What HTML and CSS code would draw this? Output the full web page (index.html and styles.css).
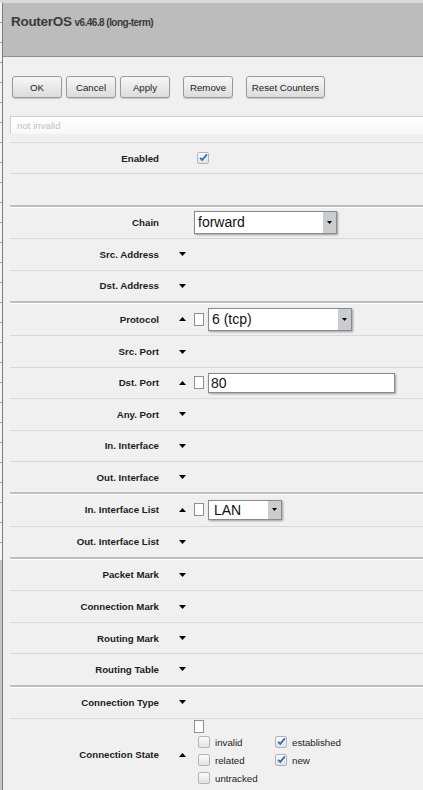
FILE: index.html
```html
<!DOCTYPE html>
<html>
<head>
<meta charset="utf-8">
<link rel="stylesheet" href="styles.css">
</head>
<body>
<div class="topstrip"></div>
<div class="main">
  <div class="leftstrip"></div>
  <div class="panel">
    <div class="header"><span class="title">RouterOS</span><span class="ver">v6.46.8 (long-term)</span></div>
    <div class="content">
      <div class="toolbar">
        <div class="group">
          <div class="btn">OK</div>
          <div class="btn">Cancel</div>
          <div class="btn">Apply</div>
        </div>
        <div class="btn">Remove</div>
        <div class="btn wide">Reset Counters</div>
      </div>
      <div class="comment">not invalid</div>
      <div class="rows">
        <div class="row">
          <div class="label">Enabled</div><div class="tri"></div>
          <div class="ctl"><span class="cb checked"><svg width="10" height="9" viewBox="0 0 10 9"><path d="M1.2 4.8 L3.6 7.2 L8.8 1" fill="none" stroke="#2f72b5" stroke-width="2"/></svg></span></div>
        </div>
        <div class="row"></div>
        <div class="row sec">
          <div class="label">Chain</div><div class="tri"></div>
          <div class="ctl"><div class="select chain"><span class="val">forward</span><span class="arr"><svg width="5" height="3"><path d="M0 0h5L2.5 3z"/></svg></span></div></div>
        </div>
        <div class="row">
          <div class="label">Src. Address</div><div class="tri"><svg width="7" height="4"><path d="M0 0h7L3.5 4z"/></svg></div>
        </div>
        <div class="row">
          <div class="label">Dst. Address</div><div class="tri"><svg width="7" height="4"><path d="M0 0h7L3.5 4z"/></svg></div>
        </div>
        <div class="row sec tall">
          <div class="label">Protocol</div><div class="tri"><svg width="7" height="4"><path d="M0 4h7L3.5 0z"/></svg></div>
          <div class="ctl"><span class="nbox"></span><div class="select proto"><span class="val">6 (tcp)</span><span class="arr"><svg width="5" height="3"><path d="M0 0h5L2.5 3z"/></svg></span></div></div>
        </div>
        <div class="row">
          <div class="label">Src. Port</div><div class="tri"><svg width="7" height="4"><path d="M0 0h7L3.5 4z"/></svg></div>
        </div>
        <div class="row">
          <div class="label">Dst. Port</div><div class="tri"><svg width="7" height="4"><path d="M0 4h7L3.5 0z"/></svg></div>
          <div class="ctl"><span class="nbox"></span><div class="input port">80</div></div>
        </div>
        <div class="row">
          <div class="label">Any. Port</div><div class="tri"><svg width="7" height="4"><path d="M0 0h7L3.5 4z"/></svg></div>
        </div>
        <div class="row">
          <div class="label">In. Interface</div><div class="tri"><svg width="7" height="4"><path d="M0 0h7L3.5 4z"/></svg></div>
        </div>
        <div class="row">
          <div class="label">Out. Interface</div><div class="tri"><svg width="7" height="4"><path d="M0 0h7L3.5 4z"/></svg></div>
        </div>
        <div class="row sec">
          <div class="label">In. Interface List</div><div class="tri"><svg width="7" height="4"><path d="M0 4h7L3.5 0z"/></svg></div>
          <div class="ctl"><span class="nbox"></span><div class="select lan"><span class="val">LAN</span><span class="arr"><svg width="5" height="3"><path d="M0 0h5L2.5 3z"/></svg></span></div></div>
        </div>
        <div class="row">
          <div class="label">Out. Interface List</div><div class="tri"><svg width="7" height="4"><path d="M0 0h7L3.5 4z"/></svg></div>
        </div>
        <div class="row sec">
          <div class="label">Packet Mark</div><div class="tri"><svg width="7" height="4"><path d="M0 0h7L3.5 4z"/></svg></div>
        </div>
        <div class="row">
          <div class="label">Connection Mark</div><div class="tri"><svg width="7" height="4"><path d="M0 0h7L3.5 4z"/></svg></div>
        </div>
        <div class="row">
          <div class="label">Routing Mark</div><div class="tri"><svg width="7" height="4"><path d="M0 0h7L3.5 4z"/></svg></div>
        </div>
        <div class="row">
          <div class="label">Routing Table</div><div class="tri"><svg width="7" height="4"><path d="M0 0h7L3.5 4z"/></svg></div>
        </div>
        <div class="row sec">
          <div class="label">Connection Type</div><div class="tri"><svg width="7" height="4"><path d="M0 0h7L3.5 4z"/></svg></div>
        </div>
        <div class="row state">
          <div class="label">Connection State</div><div class="tri"><svg width="7" height="4"><path d="M0 4h7L3.5 0z"/></svg></div>
          <div class="ctl col">
            <span class="nbox"></span>
            <div class="opts">
              <div class="opt"><span class="cb"></span>invalid</div>
              <div class="opt"><span class="cb checked"><svg width="10" height="9" viewBox="0 0 10 9"><path d="M1.2 4.8 L3.6 7.2 L8.8 1" fill="none" stroke="#2f72b5" stroke-width="2"/></svg></span>established</div>
              <div class="opt"><span class="cb"></span>related</div>
              <div class="opt"><span class="cb checked"><svg width="10" height="9" viewBox="0 0 10 9"><path d="M1.2 4.8 L3.6 7.2 L8.8 1" fill="none" stroke="#2f72b5" stroke-width="2"/></svg></span>new</div>
              <div class="opt"><span class="cb"></span>untracked</div>
            </div>
          </div>
        </div>
      </div>
    </div>
  </div>
</div>
</body>
</html>
```

FILE: styles.css
```css
html, body {
  margin: 0;
  padding: 0;
  background: #f0f0f0;
  font-family: "Liberation Sans", Arial, sans-serif;
  overflow: hidden;
}
.topstrip {
  height: 3px;
  background: #d3d9dd;
}
.main {
  display: flex;
  min-height: 787px;
}
.leftstrip {
  width: 2px;
  flex: none;
  background:
    linear-gradient(to bottom, transparent 0, transparent 557px, #c6c6c6 557px),
    repeating-linear-gradient(to bottom, #f4f4f4 0, #f4f4f4 19px, #9a9a9a 19px, #9a9a9a 20px);
  border-right: 1px solid #7c7c7c;
}
.panel {
  flex: 1;
  min-width: 0;
  background: #f0f0f0;
}
.header {
  height: 54px;
  background: #bcbcbc;
  border-bottom: 1px solid #8e8e8e;
  padding: 9px 0 0 8px;
  box-sizing: border-box;
  color: #3a3a3a;
  white-space: nowrap;
}
.title {
  font-size: 13.5px;
  font-weight: bold;
  letter-spacing: -0.3px;
}
.ver {
  font-size: 10px;
  font-weight: bold;
  letter-spacing: -0.55px;
  margin-left: 3px;
}
.content {
  padding-left: 7px;
}
.toolbar {
  display: flex;
  gap: 13px;
  margin-top: 19px;
  padding-left: 2px;
}
.group {
  display: flex;
  gap: 4px;
}
.btn {
  width: 50px;
  height: 22px;
  box-sizing: border-box;
  border: 1px solid #9a9a9a;
  border-radius: 3px;
  background: linear-gradient(#f7f7f7, #dcdcdc);
  box-shadow: 0 1px 1px rgba(0,0,0,0.18);
  font-size: 9.7px;
  color: #222;
  display: flex;
  align-items: center;
  justify-content: center;
}
.btn.wide {
  width: 79px;
}
.comment {
  margin-top: 18px;
  height: 18px;
  box-sizing: border-box;
  border-top: 1px solid #cfcfcf;
  border-left: 1px solid #cfcfcf;
  background: linear-gradient(#ffffff, #f8f8f8);
  font-size: 9.7px;
  color: #c2c2c2;
  padding: 3px 0 0 6px;
}
.rows {
  margin-top: 8px;
}
.row {
  display: flex;
  align-items: center;
  height: 31.4px;
  box-sizing: border-box;
  border-top: 1px solid #d8d8d8;
}
.row.sec {
  border-top: 2px solid #c0c0c0;
  box-shadow: inset 0 1px 0 #ffffff;
  height: 33.4px;
}
.row.tall {
  height: 34.4px;
}
.label {
  width: 149px;
  flex: none;
  text-align: right;
  font-size: 9.7px;
  font-weight: bold;
  color: #1c1c1c;
  white-space: nowrap;
}
.tri {
  width: 7px;
  flex: none;
  margin-left: 20px;
  display: flex;
  align-items: center;
}
.tri svg {
  display: block;
  fill: #000;
}
.ctl {
  margin-left: 8px;
  display: flex;
  align-items: center;
}
.cb {
  width: 12px;
  height: 12px;
  box-sizing: border-box;
  border: 1px solid #b4b4b4;
  border-radius: 2px;
  background: linear-gradient(#fbfbfb, #e2e2e2);
  display: inline-flex;
  align-items: center;
  justify-content: center;
  flex: none;
}
.row > .ctl > .cb {
  margin-left: 3px;
}
.cb svg {
  display: block;
  margin-top: -2px;
  margin-left: 1px;
}
.nbox {
  width: 10px;
  height: 13px;
  box-sizing: border-box;
  border: 1px solid #8f8f8f;
  background: #fff;
  flex: none;
  margin-right: 4px;
}
.select, .input {
  box-sizing: border-box;
  border: 1px solid #8a8a8a;
  background: #fff;
  box-shadow: 1px 1px 2px rgba(0,0,0,0.35);
  display: flex;
  align-items: center;
  font-size: 14px;
  color: #111;
}
.select .val {
  flex: 1;
  padding-left: 3px;
}
.select .arr {
  width: 13px;
  align-self: stretch;
  background: #c9cdd0;
  display: flex;
  align-items: center;
  justify-content: center;
}
.select .arr svg {
  display: block;
  fill: #000;
}
.select.chain {
  width: 143px;
  height: 23px;
}
.select.proto {
  width: 144px;
  height: 23px;
}
.select.lan {
  width: 74px;
  height: 20px;
}
.select.lan .val {
  padding-left: 5px;
}
.input.port {
  width: 187px;
  height: 20px;
  padding-left: 2px;
}
.row.state {
  height: auto;
  padding: 1px 0 6px;
}
.row.state .label,
.row.state .tri {
  margin-top: 5px;
}
.ctl.col {
  flex-direction: column;
  align-items: flex-start;
}
.opts {
  display: grid;
  grid-template-columns: 77px auto;
  row-gap: 6px;
  margin-top: 3px;
  padding-left: 4px;
}
.opt {
  display: flex;
  align-items: center;
  font-size: 9.7px;
  color: #222;
  height: 12px;
}
.opt .cb {
  margin-right: 5px;
}
```
